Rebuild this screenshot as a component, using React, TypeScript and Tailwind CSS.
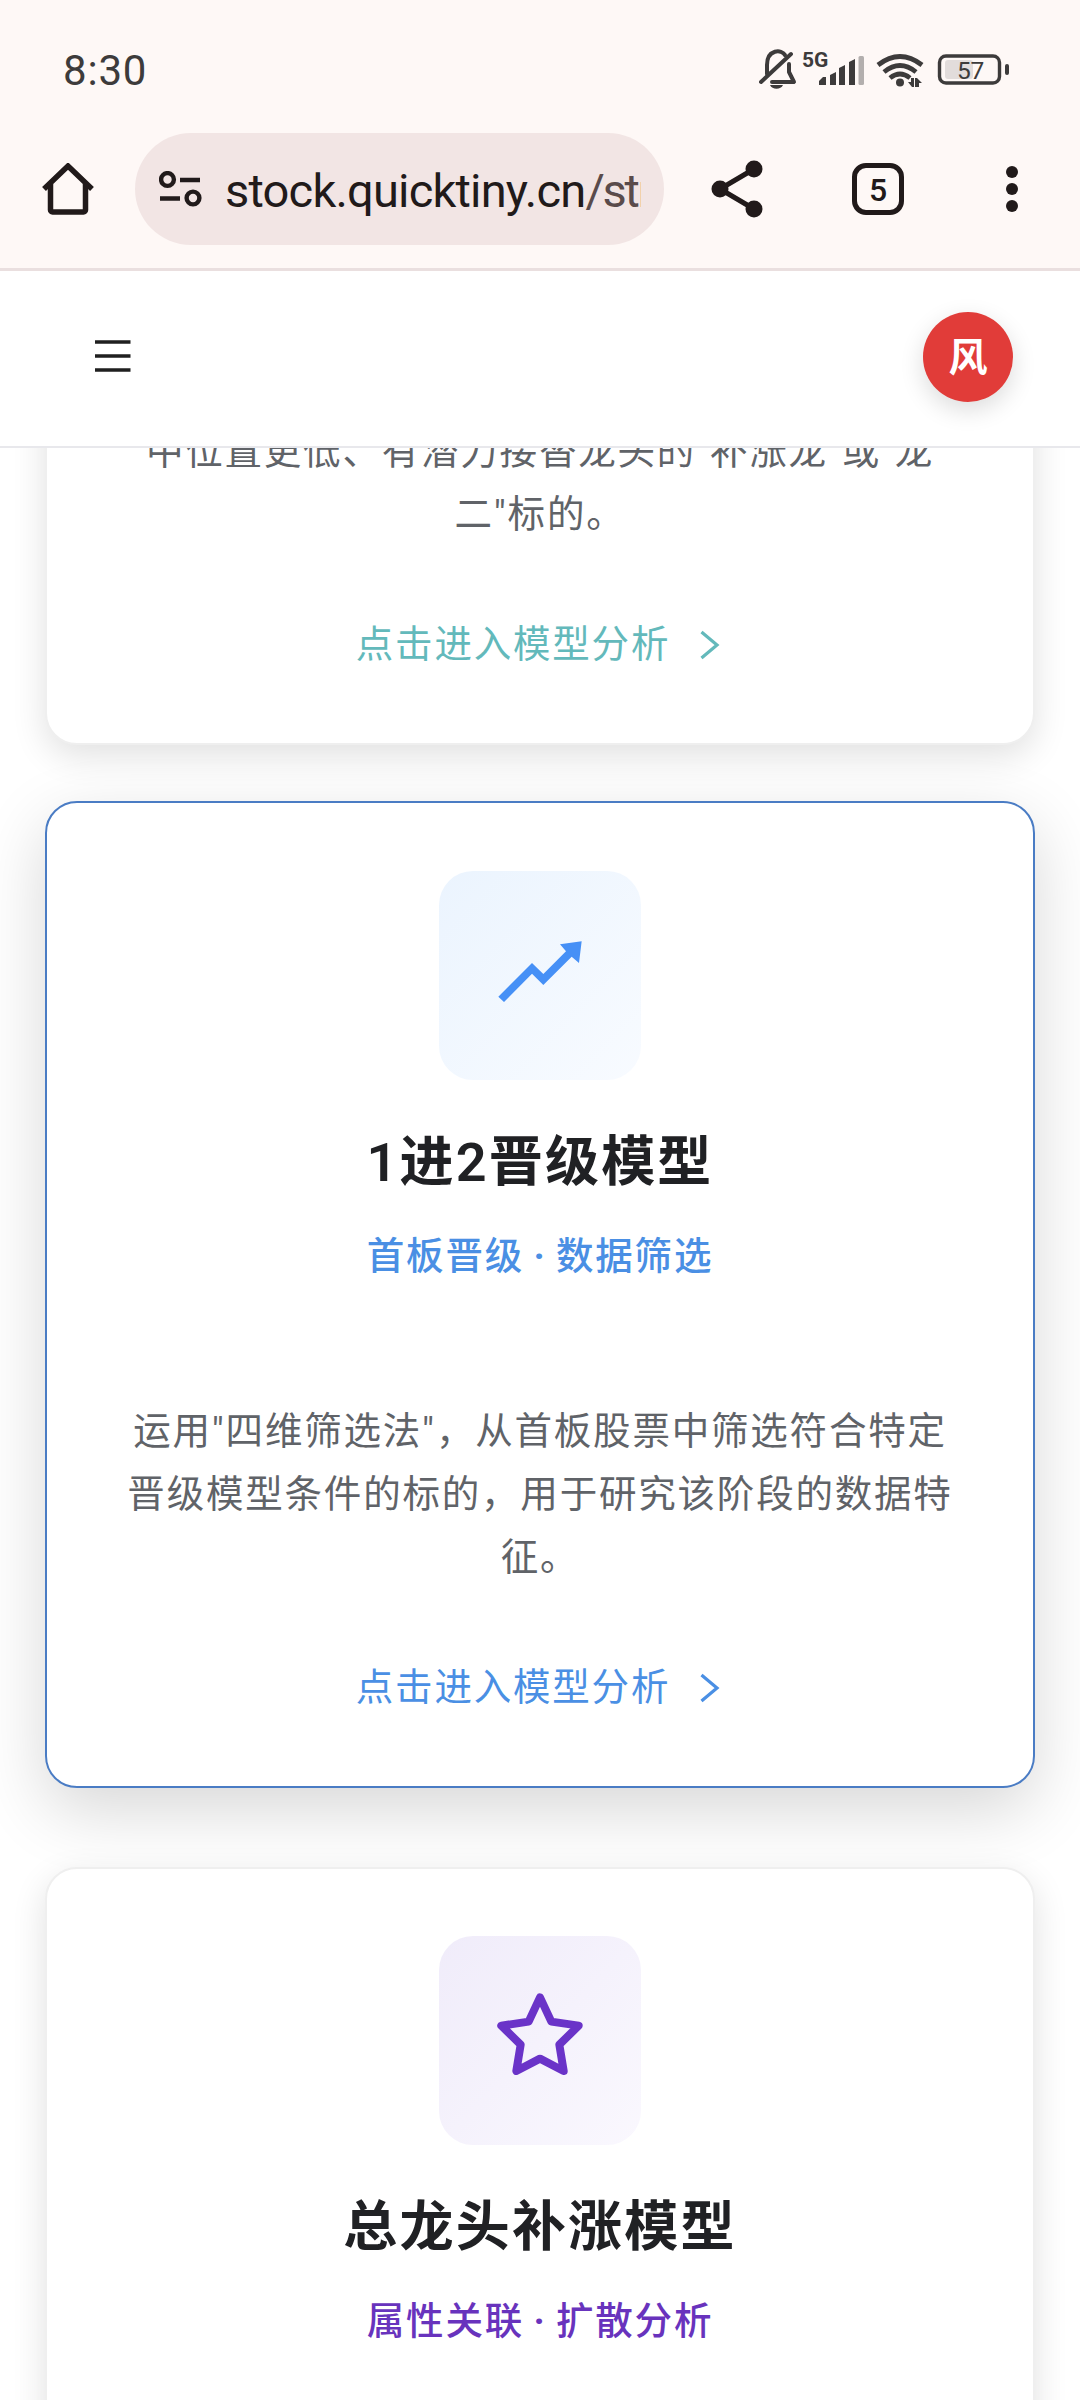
import type { ReactNode } from 'react';

interface Model {
  title?: string;
  subtitle?: [string, string];
  lines: string[];
  icon?: ReactNode;
  card: string;
  tile?: string;
  accent: string;
  link?: string;
}

function TrendIcon() {
  return (
    <svg width="84" height="62" viewBox="294 273 252 186" className="mb-[7px] fill-[#4690f6]">
      <path d="M295 440 396 339 430 372 498 304 480 283 545 274 537 339 515 320 430 405 396 371 312 456Z" />
    </svg>
  );
}

function StarIcon() {
  return (
    <svg width="86" height="82" viewBox="291 218 258 246" className="mb-[14px] fill-none stroke-[#6a33c8]">
      <path
        d="M420 231 454 304 536 316 478 373 491 452 420 415 349 452 362 373 304 316 386 304Z"
        strokeWidth="24"
        strokeLinejoin="round"
      />
    </svg>
  );
}

const MODELS: Model[] = [
  {
    lines: ['中位置更低、有潜力接替龙头的"补涨龙"或"龙', '二"标的。'],
    card: '-mt-[100px] border-[#efefef] pt-[70px] shadow-[0_11px_34px_rgba(0,0,0,0.12)]',
    accent: 'text-[#63b9bb]',
    link: '点击进入模型分析',
  },
  {
    title: '1进2晋级模型',
    subtitle: ['首板晋级', '数据筛选'],
    lines: ['运用"四维筛选法"，从首板股票中筛选符合特定', '晋级模型条件的标的，用于研究该阶段的数据特', '征。'],
    icon: <TrendIcon />,
    card: 'mt-[56px] border-[#4a7cc4] pt-[68px] shadow-[0_22px_68px_rgba(0,0,0,0.16)]',
    tile: 'bg-linear-to-br from-[#ebf4fe] to-[#f8fbff]',
    accent: 'text-[#4a8fe4]',
    link: '点击进入模型分析',
  },
  {
    title: '总龙头补涨模型',
    subtitle: ['属性关联', '扩散分析'],
    lines: [],
    icon: <StarIcon />,
    card: 'mt-[79px] min-h-[700px] border-[#efefef] pt-[67px] shadow-[0_11px_34px_rgba(0,0,0,0.12)]',
    tile: 'bg-linear-to-br from-[#f0ecfa] to-[#faf8fe]',
    accent: 'text-[#6833bd]',
  },
];

function StatusBar() {
  return (
    <div className="flex h-[133px] items-start justify-between pr-[67px] pl-[63px] text-[#3d3b3b]">
      <div className="mt-[47px] text-[42px] leading-[48px] tracking-[0.8px]">8:30</div>
      <svg width="254" height="44" viewBox="0 0 254 44" className="mt-[48px] fill-current">
        <g fill="none" stroke="currentColor" strokeWidth="4" strokeLinecap="round" strokeLinejoin="round">
          <path d="M2 34 32 6" />
          <path d="M8 26V17C8 1 23 1 26 7M30 16v8l5 10H13" />
        </g>
        <path d="M11 37h13c-2 5-11 5-13 0Z" />
        <text x="43" y="19" fontSize="21" fontWeight="700">5G</text>
        <path d="M60 37v-4l4-4h3v8ZM71 37V27l6-3v13ZM80 37V20l6-3v20ZM90 37V14l6-3v26Z" />
        <rect x="99.500" y="8" width="5.5" height="29" rx="1.5" className="fill-[#b3afae]" />
        <g fill="none" stroke="currentColor" strokeWidth="4.8">
          <path d="M119 17Q141 0 163 17" />
          <path d="M125 24Q141 11 157 24" />
          <path d="M131 30Q141 22 151 30" />
        </g>
        <circle cx="141" cy="34.500" r="4" />
        <path d="M149 34h3v-4h3v9h-2ZM156 39v-9h2l5 5h-3v4Z" />
        <rect x="180.500" y="8" width="60" height="27" rx="6.5" fill="none" stroke="currentColor" strokeWidth="3.4" />
        <rect x="186" y="12" width="28" height="19" rx="3" className="fill-[#e2dcdb]" />
        <rect x="246" y="16" width="4" height="11" rx="2" />
        <text x="198" y="30.500" fontSize="24.500" letterSpacing="-0.3">57</text>
      </svg>
    </div>
  );
}

function BrowserBar() {
  return (
    <div className="flex h-[112px] items-center pl-[42px] text-[#211a1a]">
      <svg width="52" height="52" viewBox="0 0 52 52" className="fill-none stroke-current">
        <path d="M2 26 26 3 50 26" strokeWidth="5.500" />
        <path d="M8.500 21v26a2 2 0 0 0 2 2h31a2 2 0 0 0 2-2V21" strokeWidth="5.500" />
      </svg>
      <div className="ml-[41px] flex h-full w-[529px] items-center rounded-full bg-[#f2e5e4] pl-[24px]">
        <svg width="43" height="36" viewBox="0 0 43 36" className="fill-none stroke-current" strokeWidth="4.400">
          <circle cx="8.500" cy="8.500" r="6.400" />
          <path d="M21 9h20M1 27.500h20" />
          <circle cx="34" cy="27" r="6.400" />
        </svg>
        <div className="mt-[3px] ml-[23px] w-[416px] overflow-hidden text-[47px] leading-[64px] tracking-[-0.8px] whitespace-nowrap">
          stock.quicktiny.cn<span className="tracking-[-2.2px] text-[#5a4b4b]">/strategy</span>
        </div>
      </div>
      <svg width="52" height="58" viewBox="0 0 52 58" className="ml-[47px] fill-current stroke-current">
        <path d="M43 9 9 29 43 49" fill="none" strokeWidth="5" />
        <circle cx="9" cy="29" r="8.500" stroke="none" />
        <circle cx="43" cy="9" r="8.500" stroke="none" />
        <circle cx="43" cy="49" r="8.500" stroke="none" />
      </svg>
      <div className="ml-[89px] flex h-[52px] w-[52px] items-center justify-center rounded-[14px] border-[5.5px] border-current text-[32px] leading-none font-medium">
        <span className="mt-[2px]">5</span>
      </div>
      <div className="ml-[102px] flex flex-col gap-[5.5px]">
        <i className="size-[11.5px] rounded-full bg-current" />
        <i className="size-[11.5px] rounded-full bg-current" />
        <i className="size-[11.5px] rounded-full bg-current" />
      </div>
    </div>
  );
}

function ModelCard({ model }: { model: Model }) {
  return (
    <article
      className={`flex shrink-0 flex-col items-center rounded-[32px] border-2 bg-white pb-[69px] text-center ${model.card}`}
    >
      {model.icon && (
        <div className={`flex h-[209px] w-[202px] shrink-0 items-center justify-center rounded-[34px] ${model.tile}`}>
          {model.icon}
        </div>
      )}
      {model.title && (
        <h2 className="mt-[51px] text-[54px] leading-[64px] font-semibold tracking-[2.2px] text-[#202124]">
          {model.title}
        </h2>
      )}
      {model.subtitle && (
        <p
          className={`mt-[31px] flex text-[37.5px] leading-[60px] font-medium tracking-[1.8px] ${model.accent}`}
        >
          {model.subtitle[0]}
          <span className="w-[32px] text-center font-bold">·</span>
          {model.subtitle[1]}
        </p>
      )}
      {model.lines.length > 0 && (
        <p
          className={`text-[37.5px] leading-[63px] tracking-[1.8px] text-[#606368] ${model.title ? 'mt-[114px]' : ''}`}
        >
          {model.lines.map((line) => (
            <span key={line} className="block whitespace-nowrap">
              {line}
            </span>
          ))}
        </p>
      )}
      {model.link && (
        <a className={`mt-[68px] flex items-center text-[37.5px] leading-[60px] tracking-[1.8px] ${model.accent}`}>
          {model.link}
          <svg width="20" height="30" viewBox="0 0 20 30" className="mt-[2px] mr-[4px] ml-[30px] fill-none stroke-current">
            <path d="M1.500 2 17 15 1.500 28" strokeWidth="3.200" />
          </svg>
        </a>
      )}
    </article>
  );
}

export default function App() {
  return (
    <div className="flex h-[2400px] w-[1080px] flex-col overflow-hidden bg-white font-[Roboto,'Noto_Sans_CJK_SC',sans-serif]">
      <div className="h-[271px] shrink-0 border-b-[3px] border-[#eadfdf] bg-[#fef8f6]">
        <StatusBar />
        <BrowserBar />
      </div>

      <header className="flex h-[177px] shrink-0 items-center justify-between border-b-2 border-[#e8e8ec] bg-white pr-[67px] pb-[3px] pl-[95px]">
        <svg width="36" height="32" viewBox="0 0 36 32" className="mb-[3px] stroke-[#1f1f1f]" strokeWidth="3.400">
          <path d="M0 2h35.500M0 16h35.500M0 30h35.500" />
        </svg>
        <div className="flex size-[90px] items-center justify-center rounded-full bg-[#e13c39] text-[39px] leading-none font-bold text-white shadow-[0_8px_24px_rgba(0,0,0,0.14)]">
          <span className="mt-[3px]">风</span>
        </div>
      </header>

      <main className="flex min-h-0 flex-1 flex-col overflow-hidden px-[45px]">
        {MODELS.map((model) => (
          <ModelCard key={model.card} model={model} />
        ))}
      </main>
    </div>
  );
}
